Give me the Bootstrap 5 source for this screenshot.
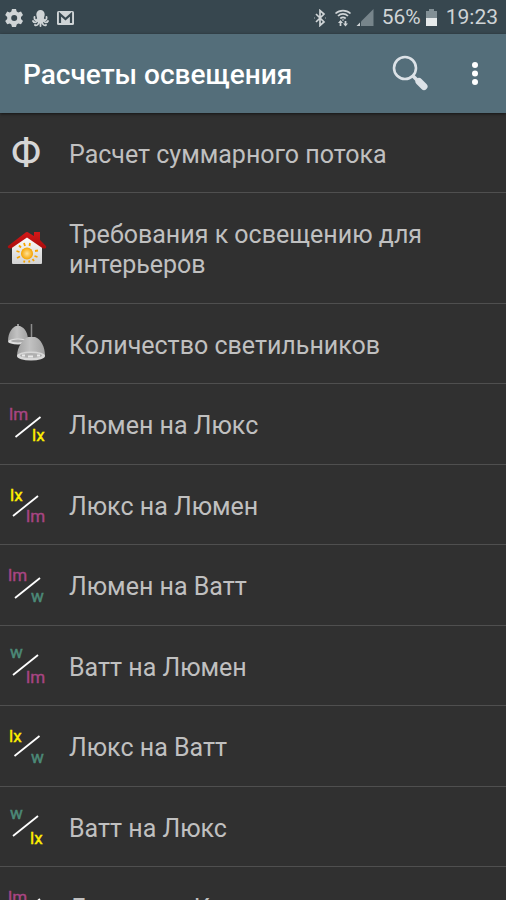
<!DOCTYPE html>
<html lang="ru">
<head>
<meta charset="utf-8">
<meta name="viewport" content="width=device-width, initial-scale=1">
<title>Расчеты освещения</title>
<link href="https://cdn.jsdelivr.net/npm/bootstrap@5.3.0/dist/css/bootstrap.min.css" rel="stylesheet">
<style>
body{background:#303030;font-family:Roboto,"Noto Sans",sans-serif;color:#bdbdbd}
.status{background:#37474f;color:#cfd4d6;height:34px;padding:1px 8px 0 5px;font-size:21px;line-height:33px}
.status svg{display:block}
.appbar{background:#546e7a;height:79px;padding:0 19px 0 23px;box-shadow:0 1px 3px rgba(0,0,0,.6);z-index:1}
.appbar h1{font-size:28px;line-height:36px;padding-top:2px;font-weight:500;color:#fff}
.tool{background:none;border:0;padding:0;display:block}
.tool svg{display:block}
.tools{gap:35px}
.calc{background:none;border-bottom:1px solid #4f4f4f}
.calc a{color:#c0c0c0;font-size:25px;line-height:30px}
.calc span{padding:27px 16px 22px 0}
.calc:nth-child(even) span{padding-bottom:23px}
.calc svg{width:69px;height:60px}
.unit{font-size:17px}
.lm{fill:#a84583;stroke:#a84583;stroke-width:.4px}
.lx{fill:#fff000;stroke:#fff000;stroke-width:.4px}
.wt{fill:#4c8a78;stroke:#4c8a78;stroke-width:.5px}
.slash{stroke:#fff;stroke-width:1.8}
</style>
</head>
<body>
<div class="vh-100 d-flex flex-column overflow-hidden">
<div class="status d-flex align-items-center justify-content-between flex-shrink-0">
  <div class="d-flex align-items-center gap-2">
    <svg width="19" height="20" viewBox="0 0 19 20" fill="#cfd4d6" aria-hidden="true"><path fill-rule="evenodd" d="M7 1h4l.7 2.6 1.5.8 2.8-.8 2 3.4-2 2v2l2 2-2 3.3-2.8-.8-1.5.9L11 19H7l-.7-2.6-1.5-.9-2.6.8L.2 13l2-2V9l-2-2 2-3.4 2.600.8 1.500-.8zM9.200 7a3 3 0 1 0 0 6 3 3 0 0 0 0-6z"/></svg>
    <svg width="17" height="18" viewBox="0 0 17 18" aria-hidden="true"><path fill="#cfd4d6" d="M4.300 5.500a4.200 4.500 0 0 1 8.400 0c0 2-1 3-1 5l-1 3H6.300l-1-3c0-2-1-3-1-5z"/><g fill="none" stroke="#cfd4d6" stroke-width="1.800" stroke-linecap="round"><path d="M6 10c-2 2-4 1-3.500-2M11 10c2 2 4 1 3.500-2M6 11c-1 3-4 3-5 1M11 11c1 3 4 3 5 1M7 12c0 4-3 5-4 4M10 12c0 4 3 5 4 4M8.500 12v5"/></g></svg>
    <svg width="17" height="14" viewBox="0 0 17 14" aria-hidden="true"><rect width="17" height="14" rx="1.500" fill="#cfd4d6"/><path d="M3 12V3.200L8.500 8 14 3.200V12" fill="none" stroke="#37474f" stroke-width="2.200"/></svg>
  </div>
  <div class="d-flex align-items-center">
    <svg class="me-2" width="12" height="18" viewBox="0 0 12 18" aria-hidden="true"><path d="M2 5l8 8-4 3.500V1.500L10 5l-8 8M.5 9h.500M11 9h.500" fill="none" stroke="#cfd4d6" stroke-width="1.700"/></svg>
    <svg class="me-1" width="18" height="18" viewBox="0 0 18 18" aria-hidden="true"><g fill="none" stroke="#cfd4d6" stroke-width="1.700"><path d="M1.500 4.500a11 11 0 0 1 15 0M4 7a7 7 0 0 1 10 0M6.300 9.500a4 4 0 0 1 5.400 0M6.500 17v-4M11.500 12v4"/></g><path fill="#cfd4d6" d="M4 14l2.500-3L9 14zM9 14.500h5l-2.500 3zM7.500 10.500h3L9 12z"/></svg>
    <svg width="18" height="18" viewBox="0 0 18 18" aria-hidden="true"><path fill="#77858b" d="M17.500 0v17H5V12.500z"/><path fill="#cfd4d6" d="M4 13.500V17H.500z"/></svg>
    <span class="ms-2">56%</span>
    <svg class="mx-1" width="13" height="18" viewBox="0 0 13 18" aria-hidden="true"><path fill="#829096" d="M4 0h5v2h3v7H1V2h3z"/><path fill="#e6eaeb" d="M1 9h11v8H1z"/></svg>
    <span class="ms-1">19:23</span>
  </div>
</div>
<header class="appbar position-relative d-flex align-items-center flex-shrink-0">
  <h1 class="mb-0 me-auto">Расчеты освещения</h1>
  <div class="tools d-flex">
  <button class="tool" type="button" aria-label="Поиск"><svg width="36" height="44" viewBox="0 0 36 44"><circle cx="13" cy="16" r="11" fill="none" stroke="#dce2e7" stroke-width="2.600"/><path d="M21 24l5 5" stroke="#dce2e7" stroke-width="3.500"/><path d="M27 29.500l5 5" stroke="#dce2e7" stroke-width="7" stroke-linecap="round"/></svg></button>
  <button class="tool" type="button" aria-label="Меню"><svg width="24" height="44" viewBox="0 0 24 44" fill="#fff"><circle cx="12" cy="13" r="3"/><circle cx="12" cy="21.500" r="3"/><circle cx="12" cy="30" r="3"/></svg></button>
  </div>
</header>
<main>
<ul class="list-unstyled mb-0">
  <li class="calc"><a href="#" class="d-flex align-items-center text-decoration-none"><svg class="flex-shrink-0" viewBox="0 0 69 60" aria-hidden="true"><text x="26" y="44" text-anchor="middle" font-size="42" fill="#d6d6d6">Φ</text></svg><span>Расчет суммарного потока</span></a></li>
  <li class="calc"><a href="#" class="d-flex align-items-center text-decoration-none"><svg class="flex-shrink-0" viewBox="0 0 69 60" aria-hidden="true">
    <defs><linearGradient id="wall" x2="0" y2="1"><stop stop-color="#fff"/><stop offset="1" stop-color="#d2d2d2"/></linearGradient><linearGradient id="roof" x2="0" y2="1"><stop stop-color="#d41818"/><stop offset="1" stop-color="#a90d0d"/></linearGradient><radialGradient id="sun"><stop stop-color="#ffe39a"/><stop offset="1" stop-color="#f5a300"/></radialGradient></defs>
    <path d="M12 28l15-11 15 11v17q0 1-1 1H13q-1 0-1-1z" fill="url(#wall)"/>
    <path d="M34 14h6v8l6 6q1 3-3 2.500L27 19.500 11 30.500q-4 0-3-2.500l17-13q2-2 4 0l5 3z" fill="url(#roof)"/>
    <circle cx="27" cy="35.500" r="6" fill="url(#sun)"/><path d="M24 25l1 3M30 25l-.5 3M24.500 42.500l-.5 2M29 42.500l.5 2M16.500 33l3 1M17 40l3-1.500M35 33l3-.5M34.500 38l3 1M19 27.500l2 2M32.500 41l1.500 2" stroke="#f5a300" stroke-width="1.800"/></svg><span>Требования к освещению для интерьеров</span></a></li>
  <li class="calc"><a href="#" class="d-flex align-items-center text-decoration-none"><svg class="flex-shrink-0" viewBox="0 0 69 60" aria-hidden="true">
    <defs><linearGradient id="shade"><stop stop-color="#a2a2a2"/><stop offset=".45" stop-color="#c2c2c2"/><stop offset="1" stop-color="#a2a2a2"/></linearGradient></defs>
    <path d="M18 10v4" stroke="#999" stroke-width="2"/><path d="M8 27C8 18 13 13 16 12h4c5 2 8 7 8 15z" fill="url(#shade)"/><ellipse cx="18" cy="27.500" rx="10" ry="3" fill="#dedede"/><ellipse cx="18" cy="27" rx="7" ry="1.500" fill="#a9a9a9"/>
    <path d="M31.500 10v14" stroke="#8d8d8d" stroke-width="1.500"/><path d="M17 42c0-9 6-17 11-19h7c6 2 10 10 10 19z" fill="url(#shade)"/><ellipse cx="31" cy="42" rx="14" ry="4.500" fill="#d8d8d8"/><ellipse cx="31" cy="41.500" rx="11" ry="2.500" fill="#b0b0b0"/><path d="M22 41.500h3M28 42.500h5M37 41.500h3" stroke="#e8e8e8" stroke-width="2"/></svg><span>Количество светильников</span></a></li>
  <li class="calc"><a href="#" class="d-flex align-items-center text-decoration-none"><svg class="unit flex-shrink-0" viewBox="0 0 69 60" aria-hidden="true"><text class="lm" x="9" y="26">lm</text><path class="slash" d="M15.500 43l25-20"/><text class="lx" x="32" y="47">lx</text></svg><span>Люмен на Люкс</span></a></li>
  <li class="calc"><a href="#" class="d-flex align-items-center text-decoration-none"><svg class="unit flex-shrink-0" viewBox="0 0 69 60" aria-hidden="true"><text class="lx" x="10" y="26">lx</text><path class="slash" d="M13 41l25-20"/><text class="lm" x="26" y="47">lm</text></svg><span>Люкс на Люмен</span></a></li>
  <li class="calc"><a href="#" class="d-flex align-items-center text-decoration-none"><svg class="unit flex-shrink-0" viewBox="0 0 69 60" aria-hidden="true"><text class="lm" x="8" y="26">lm</text><path class="slash" d="M15 43l25-20"/><text class="wt" x="31" y="47">w</text></svg><span>Люмен на Ватт</span></a></li>
  <li class="calc"><a href="#" class="d-flex align-items-center text-decoration-none"><svg class="unit flex-shrink-0" viewBox="0 0 69 60" aria-hidden="true"><text class="wt" x="10" y="22">w</text><path class="slash" d="M13 39l25-20"/><text class="lm" x="26" y="47">lm</text></svg><span>Ватт на Люмен</span></a></li>
  <li class="calc"><a href="#" class="d-flex align-items-center text-decoration-none"><svg class="unit flex-shrink-0" viewBox="0 0 69 60" aria-hidden="true"><text class="lx" x="9" y="26">lx</text><path class="slash" d="M14.500 40l25-20"/><text class="wt" x="31" y="47">w</text></svg><span>Люкс на Ватт</span></a></li>
  <li class="calc"><a href="#" class="d-flex align-items-center text-decoration-none"><svg class="unit flex-shrink-0" viewBox="0 0 69 60" aria-hidden="true"><text class="wt" x="10" y="22">w</text><path class="slash" d="M13 39l25-20"/><text class="lx" x="30" y="47">lx</text></svg><span>Ватт на Люкс</span></a></li>
  <li class="calc"><a href="#" class="d-flex align-items-center text-decoration-none"><svg class="unit flex-shrink-0" viewBox="0 0 69 60" aria-hidden="true"><text class="lm" x="8" y="26">lm</text><path class="slash" d="M15 42l25-20"/><text class="wt" x="31" y="47">cd</text></svg><span>Люмен на Канделы</span></a></li>
</ul>
</main>
</div>
<script src="https://cdn.jsdelivr.net/npm/bootstrap@5.3.0/dist/js/bootstrap.bundle.min.js"></script>
</body>
</html>
